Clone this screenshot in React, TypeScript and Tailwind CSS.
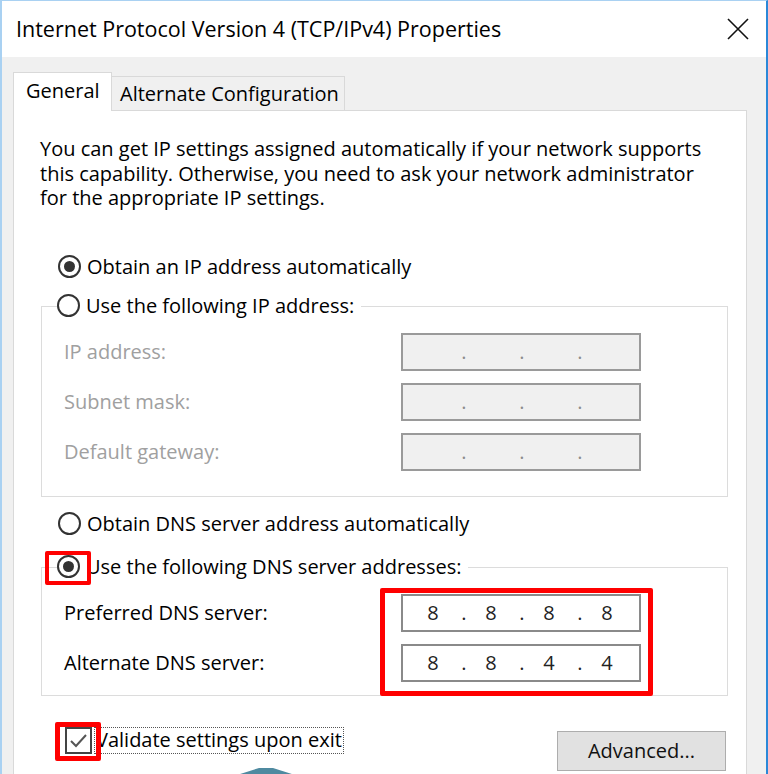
import { ReactNode } from 'react';

function Radio({ checked }: { checked?: boolean }) {
  return (
    <span className="w-[23px] h-[23px] rounded-full border-2 border-[#333333] bg-white flex items-center justify-center shrink-0">
      {checked && <span className="w-[11px] h-[11px] rounded-full bg-[#333333]" />}
    </span>
  );
}

function RadioRow({ checked, label, className }: { checked?: boolean; label: string; className?: string }) {
  return (
    <div className={`h-[26px] flex items-center gap-[6px] w-fit ${className || ''}`}>
      <Radio checked={checked} />
      <span className="whitespace-nowrap">{label}</span>
    </div>
  );
}

function IpBox({ parts, disabled }: { parts: string[]; disabled?: boolean }) {
  const cells: ReactNode[] = [];
  parts.forEach((p, i) => {
    cells.push(
      <span key={`p${i}`} className="w-[46px] text-center">
        {p}
      </span>
    );
    if (i < parts.length - 1) {
      cells.push(
        <span key={`d${i}`} className={`w-[12px] pl-[4px] text-center ${disabled ? 'text-[#8c8c8c]' : ''}`}>
          .
        </span>
      );
    }
  });
  return (
    <div
      className={`w-[240px] h-[38px] border-2 flex items-center pl-[7px] ${
        disabled ? 'bg-[#f0f0f0] border-[#9a9a9a]' : 'bg-white border-[#8a8a8a] text-[#222222]'
      }`}
    >
      {cells}
    </div>
  );
}

function FieldRow({ label, parts, disabled }: { label: string; parts: string[]; disabled?: boolean }) {
  return (
    <div className="flex items-center h-[38px] pl-[22px]">
      <span className={`w-[337px] whitespace-nowrap ${disabled ? 'text-[#a0a0a0]' : ''}`}>{label}</span>
      <IpBox parts={parts} disabled={disabled} />
    </div>
  );
}

export default function App() {
  return (
    <div className="relative w-[768px] h-[774px] overflow-hidden bg-[#f0f0f0] border-t border-l-2 border-r-2 border-t-[#a9d1f2] border-l-[#a9d1f2] border-r-[#2b88d8] font-['Open_Sans','Noto_Sans',sans-serif] text-[20px] text-[#000000]">
      {/* title bar */}
      <div className="h-[56px] bg-white flex items-center justify-between pl-[14px] pr-[17px]">
        <span className="text-[21.5px] whitespace-nowrap">Internet Protocol Version 4 (TCP/IPv4) Properties</span>
        <svg width="22" height="22" viewBox="0 0 22 22">
          <path d="M1 1 L21 21 M21 1 L1 21" stroke="#111" strokeWidth="1.6" />
        </svg>
      </div>

      <div className="pt-[15px] pl-[11px]">
        {/* tabs */}
        <div className="flex items-start h-[38px]">
          <div className="relative z-10 h-[39px] w-[99px] bg-white border border-b-0 border-[#d9d9d9] flex items-center pl-[12px] pb-[2px]">
            General
          </div>
          <div className="mt-[4px] h-[34px] w-[233px] bg-[#f0f0f0] border-t border-r border-[#d9d9d9] flex items-center pl-[8px] whitespace-nowrap">
            Alternate Configuration
          </div>
        </div>

        {/* panel */}
        <div className="w-[734px] h-[700px] bg-white border border-[#d9d9d9]">
          <p className="pt-[26px] pl-[26px] leading-[24.5px] whitespace-nowrap">
            You can get IP settings assigned automatically if your network supports
            <br />
            this capability. Otherwise, you need to ask your network administrator
            <br />
            for the appropriate IP settings.
          </p>

          <RadioRow checked label="Obtain an IP address automatically" className="mt-[43px] ml-[44px]" />

          <div className="mt-[26px] ml-[27px] w-[687px] border border-[#dcdcdc] pb-[25px]">
            <RadioRow label="Use the following IP address:" className="-mt-[14px] ml-[15px] bg-white pr-[7px]" />
            <div className="mt-[14px] flex flex-col gap-[12px]">
              <FieldRow label="IP address:" parts={['', '', '', '']} disabled />
              <FieldRow label="Subnet mask:" parts={['', '', '', '']} disabled />
              <FieldRow label="Default gateway:" parts={['', '', '', '']} disabled />
            </div>
          </div>

          <RadioRow label="Obtain DNS server address automatically" className="mt-[14px] ml-[44px]" />

          <div className="mt-[30px] ml-[27px] w-[687px] border border-[#dcdcdc] pb-[13px]">
            <RadioRow checked label="Use the following DNS server addresses:" className="-mt-[14px] ml-[15px] bg-white pr-[7px]" />
            <div className="mt-[14px] flex flex-col gap-[12px]">
              <FieldRow label="Preferred DNS server:" parts={['8', '8', '8', '8']} />
              <FieldRow label="Alternate DNS server:" parts={['8', '8', '4', '4']} />
            </div>
          </div>

          <div className="mt-[31px] flex items-start justify-between pl-[51px] pr-[20px]">
            <div className="flex items-center">
              <span className="w-[27px] h-[27px] border-2 border-[#444444] flex items-center justify-center">
                <svg width="19" height="19" viewBox="0 0 19 19">
                  <path d="M2 10 L7 15 L17 4" fill="none" stroke="#555" strokeWidth="2" />
                </svg>
              </span>
              <span className="ml-[2px] h-[27px] px-[1px] flex items-center border border-dotted border-[#555555] whitespace-nowrap">
                Validate settings upon exit
              </span>
            </div>
            <button className="mt-[4px] w-[169px] h-[40px] bg-[#e1e1e1] border border-[#adadad] text-[#111111]">
              Advanced...
            </button>
          </div>
        </div>
      </div>

      {/* red highlight boxes */}
      <div className="absolute left-[43px] top-[550px] w-[46px] h-[34px] border-[4px] border-[#ff0000] rounded-[2px]" />
      <div className="absolute left-[378px] top-[587px] w-[273px] h-[108px] border-[5px] border-[#ff0000] rounded-[2px]" />
      <div className="absolute left-[53px] top-[721px] w-[46px] h-[39px] border-[5px] border-[#ff0000] rounded-[2px]" />

      {/* watermark fragment */}
      <svg className="absolute left-[235px] top-[766px]" width="58" height="8" viewBox="0 0 58 8">
        <polygon points="0,8 22,1 36,1 58,8" fill="#4f8aa0" />
      </svg>
    </div>
  );
}
